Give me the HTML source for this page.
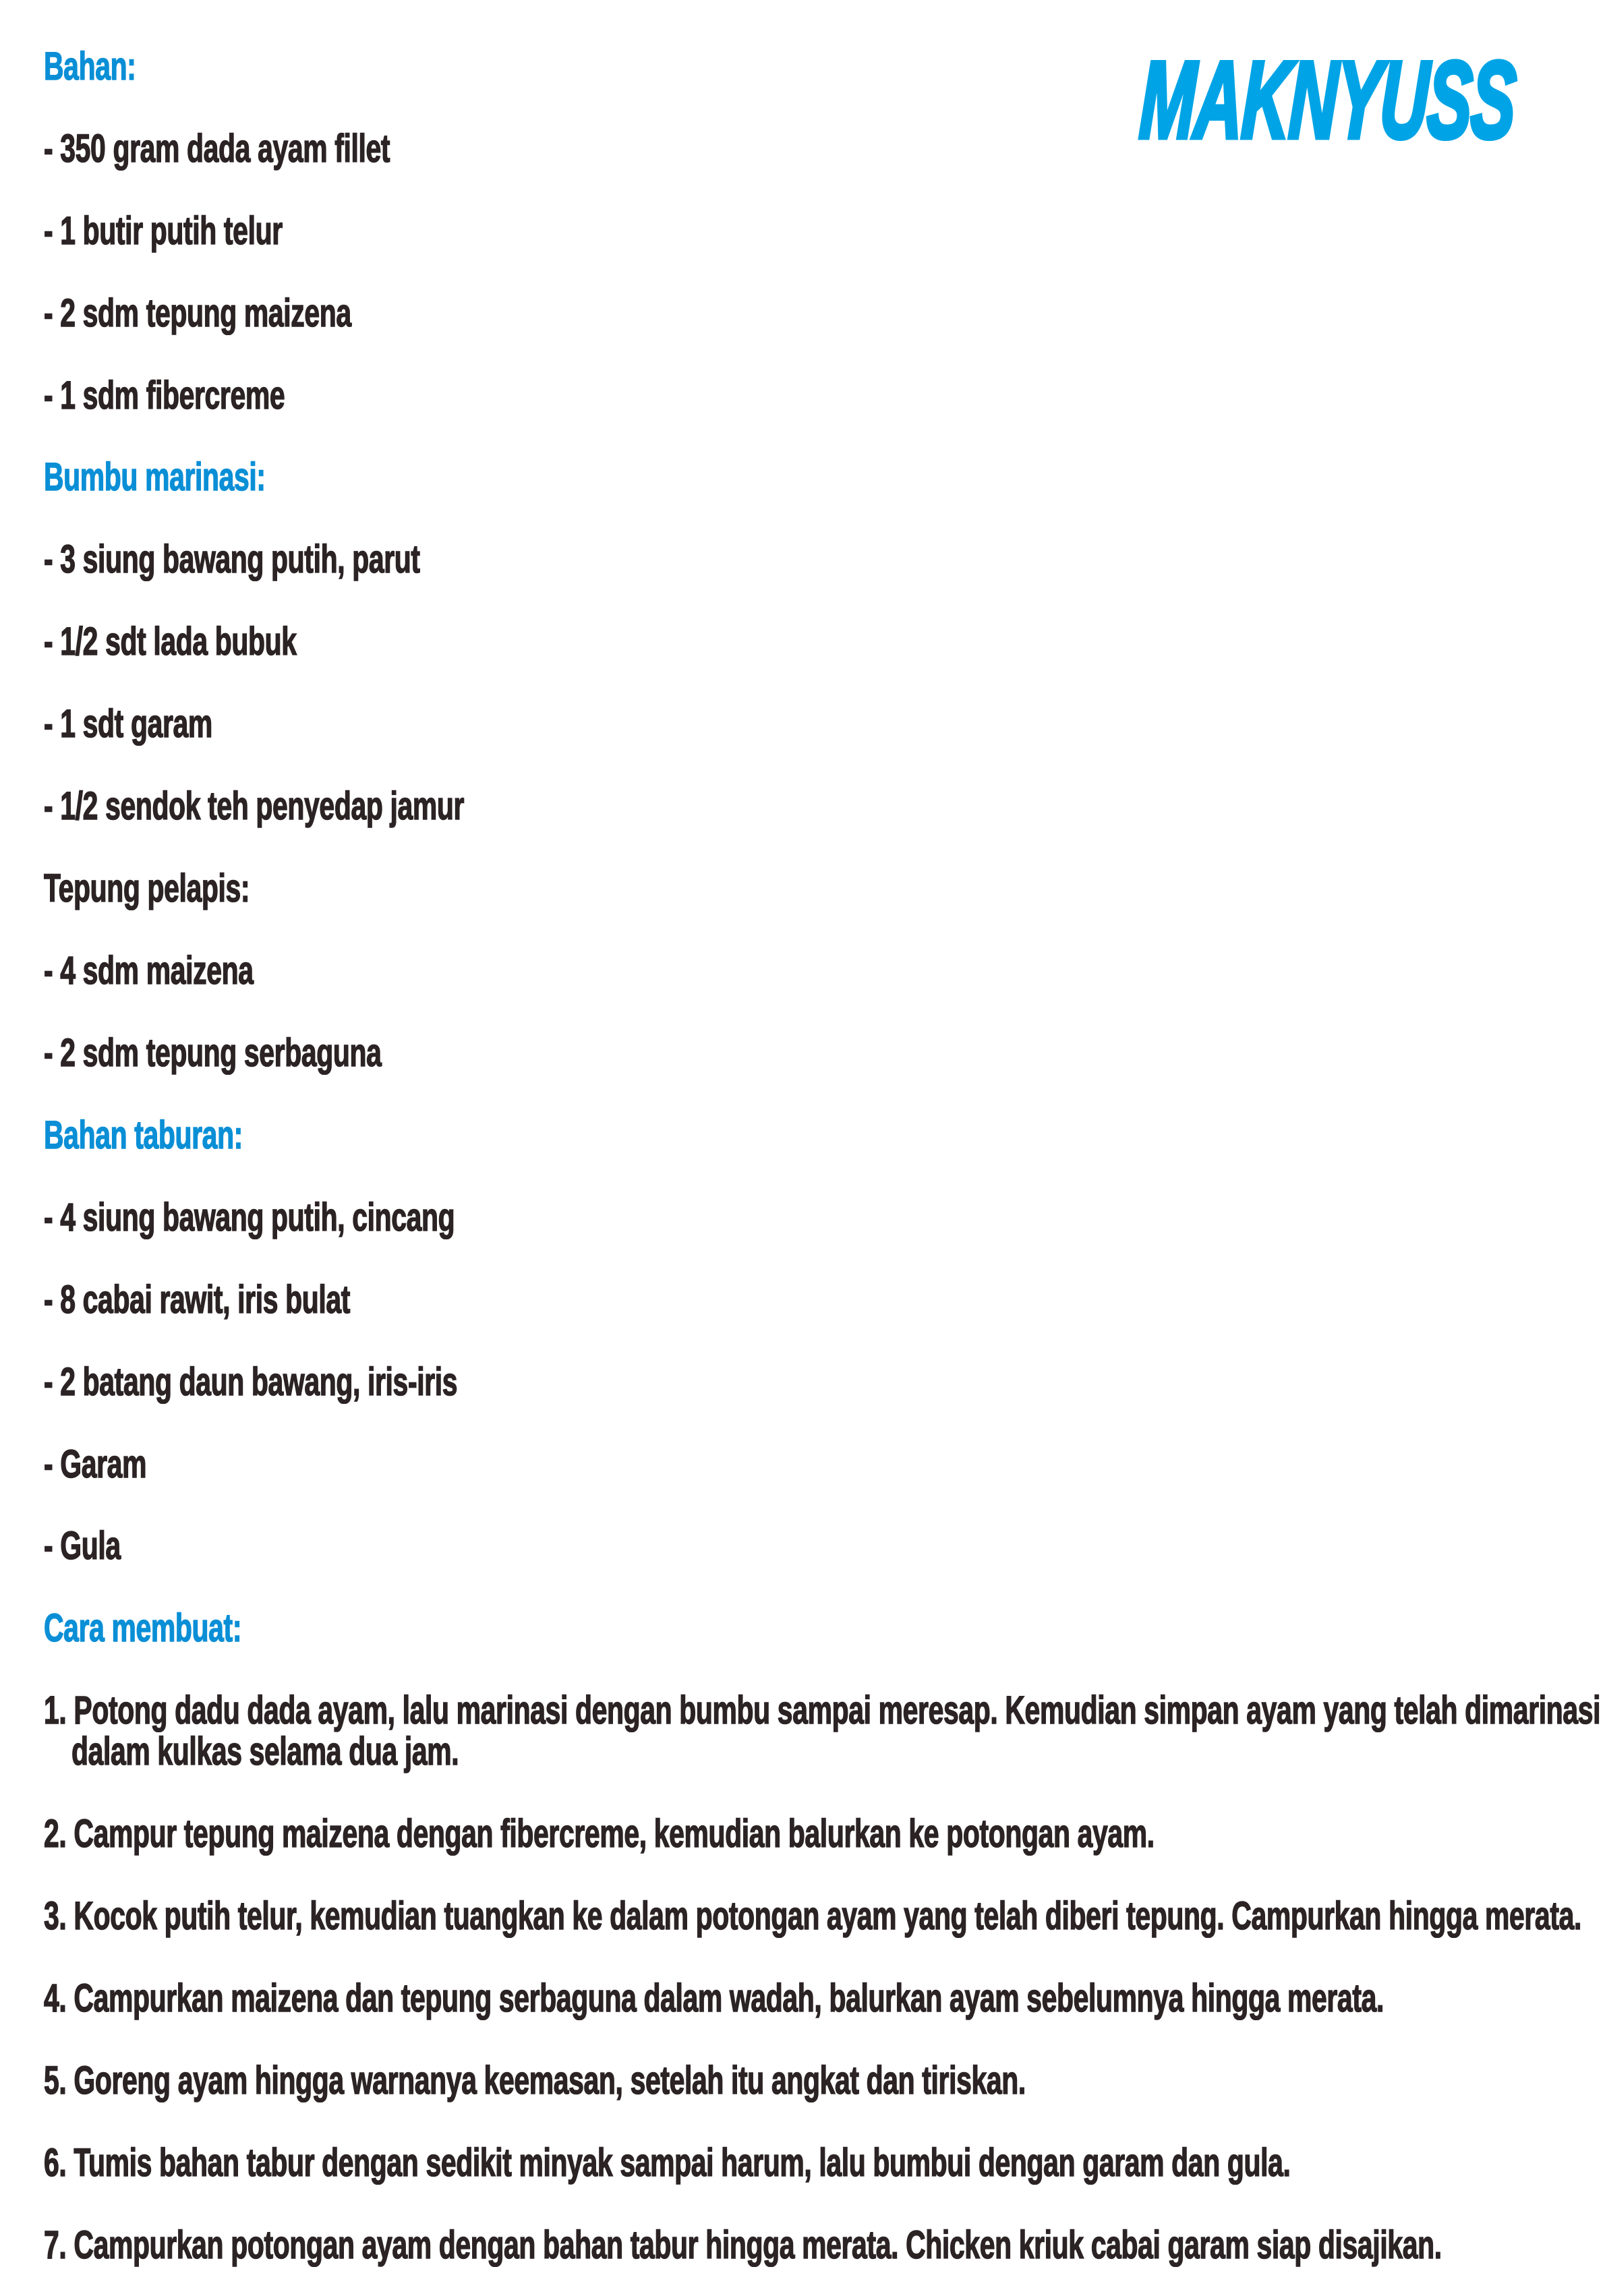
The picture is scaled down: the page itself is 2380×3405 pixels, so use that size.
<!DOCTYPE html>
<html><head><meta charset="utf-8"><style>
html,body{margin:0;padding:0;background:#fff;}
body{width:2380px;height:3405px;position:relative;overflow:hidden;font-family:"Liberation Sans",sans-serif;}
.l{position:absolute;left:65px;font-size:58px;line-height:54px;font-weight:bold;color:#2b2324;white-space:nowrap;transform:scaleX(0.705);transform-origin:0 0;letter-spacing:-0.5px;-webkit-text-stroke:1.5px #2b2324;margin-top:-1px;}
.h{color:#0a8fd6;-webkit-text-stroke:1.5px #0a8fd6;}
.logo{position:absolute;left:1694px;top:70px;font-size:162px;line-height:158px;font-weight:bold;font-style:italic;color:#00a4e6;white-space:nowrap;transform:scaleX(0.61) skewX(-4deg);transform-origin:0 0;-webkit-text-stroke:7px #00a4e6;letter-spacing:-2px;}
</style></head><body>
<div class="logo">MAKNYUSS</div>
<div class="l h" style="top:73px">Bahan:</div>
<div class="l" style="top:195px">- 350 gram dada ayam fillet</div>
<div class="l" style="top:317px">- 1 butir putih telur</div>
<div class="l" style="top:439px">- 2 sdm tepung maizena</div>
<div class="l" style="top:561px">- 1 sdm fibercreme</div>
<div class="l h" style="top:682px">Bumbu marinasi:</div>
<div class="l" style="top:804px">- 3 siung bawang putih, parut</div>
<div class="l" style="top:926px">- 1/2 sdt lada bubuk</div>
<div class="l" style="top:1048px">- 1 sdt garam</div>
<div class="l" style="top:1170px">- 1/2 sendok teh penyedap jamur</div>
<div class="l" style="top:1292px">Tepung pelapis:</div>
<div class="l" style="top:1414px">- 4 sdm maizena</div>
<div class="l" style="top:1536px">- 2 sdm tepung serbaguna</div>
<div class="l h" style="top:1658px">Bahan taburan:</div>
<div class="l" style="top:1780px">- 4 siung bawang putih, cincang</div>
<div class="l" style="top:1902px">- 8 cabai rawit, iris bulat</div>
<div class="l" style="top:2024px">- 2 batang daun bawang, iris-iris</div>
<div class="l" style="top:2146px">- Garam</div>
<div class="l" style="top:2267px">- Gula</div>
<div class="l h" style="top:2389px">Cara membuat:</div>
<div class="l" style="top:2511px">1. Potong dadu dada ayam, lalu marinasi dengan bumbu sampai meresap. Kemudian simpan ayam yang telah dimarinasi</div>
<div class="l" style="top:2572px;left:106px">dalam kulkas selama dua jam.</div>
<div class="l" style="top:2694px">2. Campur tepung maizena dengan fibercreme, kemudian balurkan ke potongan ayam.</div>
<div class="l" style="top:2816px">3. Kocok putih telur, kemudian tuangkan ke dalam potongan ayam yang telah diberi tepung. Campurkan hingga merata.</div>
<div class="l" style="top:2938px">4. Campurkan maizena dan tepung serbaguna dalam wadah, balurkan ayam sebelumnya hingga merata.</div>
<div class="l" style="top:3060px">5. Goreng ayam hingga warnanya keemasan, setelah itu angkat dan tiriskan.</div>
<div class="l" style="top:3182px">6. Tumis bahan tabur dengan sedikit minyak sampai harum, lalu bumbui dengan garam dan gula.</div>
<div class="l" style="top:3304px">7. Campurkan potongan ayam dengan bahan tabur hingga merata. Chicken kriuk cabai garam siap disajikan.</div>
</body></html>
